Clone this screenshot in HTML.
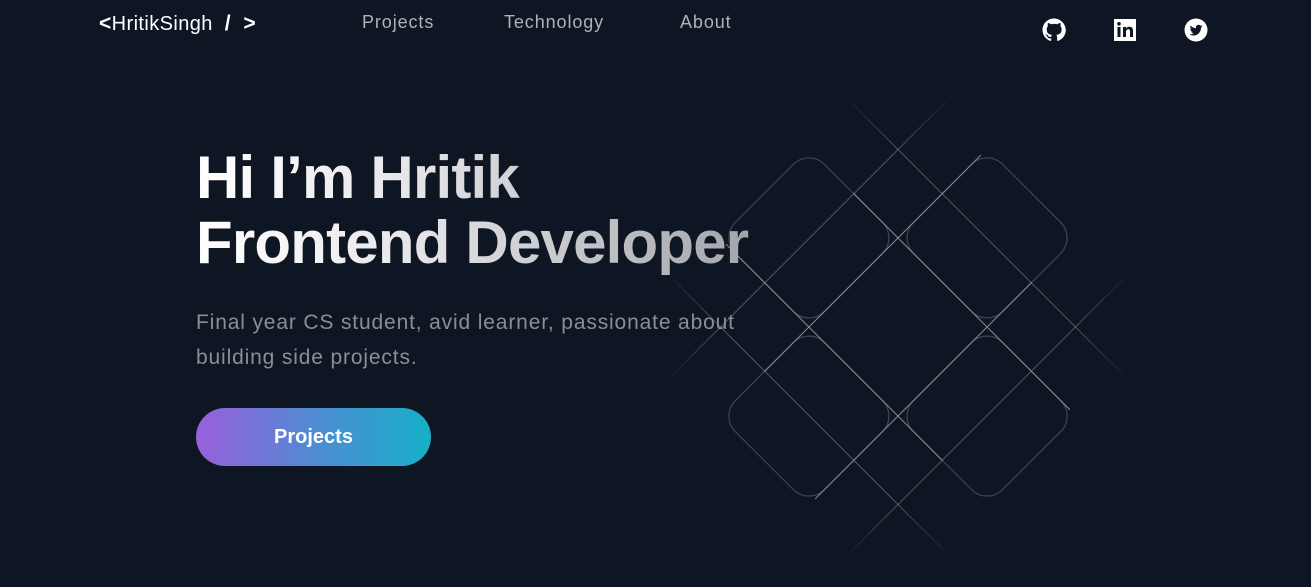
<!DOCTYPE html>
<html><head><meta charset="utf-8"><style>
*{margin:0;padding:0;box-sizing:border-box}
html,body{width:1311px;height:587px;overflow:hidden;background:#0f1623;font-family:"Liberation Sans",sans-serif}
.logo{position:absolute;left:99px;top:12px;color:#fff;font-size:20px;white-space:nowrap;letter-spacing:0.4px}
.logo b{font-weight:bold;font-size:21px}
.nav a{position:absolute;top:12px;color:#aeb2ba;font-size:18px;letter-spacing:0.9px;text-decoration:none}
h1{position:absolute;left:196px;top:145px;font-size:60px;line-height:65px;font-weight:bold;letter-spacing:-0.8px;white-space:nowrap;
background:linear-gradient(90deg,#ffffff 0%,#e9e9ec 35%,#a2a4aa 100%);-webkit-background-clip:text;background-clip:text;color:transparent;width:560px}
p{position:absolute;left:196px;top:305px;width:560px;font-size:21px;letter-spacing:0.85px;line-height:35px;color:#8b8e97}
.btn{position:absolute;left:196px;top:408px;width:235px;height:58px;border-radius:29px;background:linear-gradient(90deg,#9a5fdc,#4a8fd2 55%,#16b0c8);color:#fff;font-weight:bold;font-size:20px;text-align:center;line-height:58px}
.ic{position:absolute;top:18px;width:24px;height:24px}
</style></head><body>
<div class="logo"><b>&lt;</b>HritikSingh &nbsp;<b>/ &nbsp;&gt;</b></div>
<div class="nav"><a style="left:362px">Projects</a><a style="left:504px">Technology</a><a style="left:680px">About</a></div>
<svg class="ic" style="left:1042px" viewBox="0 0 24 24"><path fill="#fff" d="M12 .5C5.6.5.5 5.6.5 12c0 5.1 3.3 9.4 7.9 10.9.6.1.8-.2.8-.6v-2c-3.2.7-3.9-1.5-3.9-1.5-.5-1.3-1.3-1.7-1.3-1.7-1-.7.1-.7.1-.7 1.2.1 1.8 1.2 1.8 1.2 1 1.8 2.7 1.3 3.4 1 .1-.8.4-1.3.7-1.6-2.6-.3-5.3-1.3-5.3-5.7 0-1.3.5-2.3 1.2-3.1-.1-.3-.5-1.5.1-3.1 0 0 1-.3 3.3 1.2a11.5 11.5 0 0 1 6 0C17.3 4.6 18.3 5 18.3 5c.6 1.6.2 2.8.1 3.1.8.8 1.2 1.8 1.2 3.1 0 4.4-2.7 5.4-5.3 5.7.4.4.8 1.1.8 2.2v3.2c0 .4.2.7.8.6 4.6-1.5 7.9-5.8 7.9-10.9C23.5 5.6 18.4.5 12 .5z"/></svg>
<svg class="ic" style="left:1113px" viewBox="0 0 24 24"><rect x="1" y="1" width="22" height="22" fill="#fff"/><rect x="4.5" y="9" width="3" height="10" fill="#0f1623"/><circle cx="6" cy="5.8" r="1.8" fill="#0f1623"/><path fill="#0f1623" d="M10 9h3v1.5c.6-1 1.7-1.8 3.4-1.8 2.6 0 3.6 1.6 3.6 4.3V19h-3v-5.4c0-1.4-.4-2.3-1.6-2.3-1.3 0-2.4.9-2.4 2.4V19h-3z"/></svg>
<svg class="ic" style="left:1184px" viewBox="0 0 24 24"><circle cx="12" cy="12" r="11.5" fill="#fff"/><path fill="#0f1623" d="M18.5 8.2c-.5.2-1 .4-1.5.4.6-.3 1-.9 1.2-1.5-.5.3-1.1.5-1.7.7a2.6 2.6 0 0 0-4.5 2.4c-2.2-.1-4.1-1.1-5.4-2.7-.7 1.2-.3 2.7.8 3.5-.4 0-.8-.1-1.2-.3 0 1.3.9 2.4 2.1 2.6-.4.1-.8.1-1.2 0 .3 1.1 1.3 1.8 2.5 1.8A5.3 5.3 0 0 1 5.5 16.4c1.2.7 2.5 1.1 4 1.1 4.8 0 7.5-4 7.5-7.5v-.3c.6-.4 1.1-.9 1.5-1.5z"/></svg>

<svg style="position:absolute;left:0;top:0" width="1311" height="587">
<defs>
<linearGradient id="fa" x1="0" y1="0" x2="1" y2="0"><stop offset="0" stop-color="#9aa0aa" stop-opacity="0"/><stop offset=".2" stop-color="#9aa0aa" stop-opacity=".45"/><stop offset=".8" stop-color="#9aa0aa" stop-opacity=".45"/><stop offset="1" stop-color="#9aa0aa" stop-opacity="0"/></linearGradient>
<linearGradient id="fb" x1="0" y1="0" x2="0" y2="1"><stop offset="0" stop-color="#9aa0aa" stop-opacity="0"/><stop offset=".2" stop-color="#9aa0aa" stop-opacity=".45"/><stop offset=".8" stop-color="#9aa0aa" stop-opacity=".45"/><stop offset="1" stop-color="#9aa0aa" stop-opacity="0"/></linearGradient>
</defs>
<g transform="translate(898,327) rotate(45)" fill="none">
<g stroke="#3c4352" stroke-width="1.2">
<rect x="-189" y="-63" width="126" height="126" rx="22"/>
<rect x="63" y="-63" width="126" height="126" rx="22"/>
<rect x="-63" y="-189" width="126" height="126" rx="22"/>
<rect x="-63" y="63" width="126" height="126" rx="22"/>
</g>
<g stroke="#8c919b" stroke-width="1">
<line x1="-126" y1="-63" x2="180" y2="-63"/>
<line x1="-180" y1="63" x2="126" y2="63"/>
<line x1="-63" y1="-180" x2="-63" y2="126"/>
<line x1="63" y1="-126" x2="63" y2="180"/>
</g>
<rect x="-205" y="-126" width="410" height="1" fill="url(#fa)"/>
<rect x="-205" y="125" width="410" height="1" fill="url(#fa)"/>
<rect x="-126" y="-205" width="1" height="410" fill="url(#fb)"/>
<rect x="125" y="-205" width="1" height="410" fill="url(#fb)"/>
</g>
</svg>

<h1>Hi I’m Hritik<br>Frontend Developer</h1>
<p>Final year CS student, avid learner, passionate about building side projects.</p>
<div class="btn">Projects</div>
</body></html>
